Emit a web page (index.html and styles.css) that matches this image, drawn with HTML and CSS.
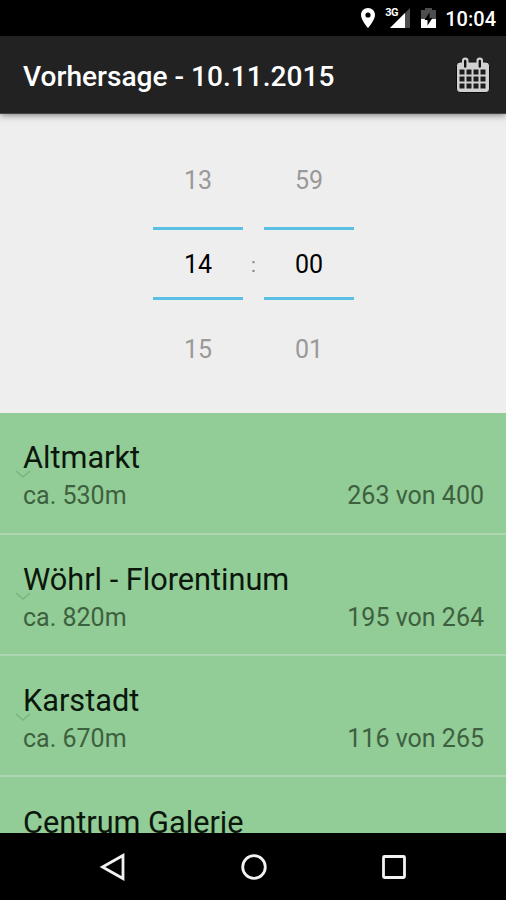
FILE: index.html
```
<!DOCTYPE html>
<html lang="de">
<head>
  <meta charset="utf-8">
  <title>Vorhersage</title>
  <link rel="stylesheet" href="styles.css">
</head>
<body>
  <div class="status">
    <svg class="pin" width="14" height="20" viewBox="0 0 14 20">
      <path fill="#fff" fill-rule="evenodd" d="M7 0C3 0 0 3 0 7c0 5 7 13 7 13s7-8 7-13c0-4-3-7-7-7zm0 4.400a2.600 2.600 0 1 1 0 5.200 2.600 2.600 0 0 1 0-5.200z"/>
    </svg>
    <div class="signal">
      <span>3G</span>
      <svg width="20" height="20" viewBox="0 0 20 20">
        <path fill="#4d4d4d" d="M20 0v20H0z"/>
        <path fill="#fff" d="M15 5v15H0z"/>
      </svg>
    </div>
    <svg class="battery" width="15" height="20" viewBox="0 0 15 20">
      <path fill="#4d4d4d" d="M4 0h7v2h4v9H0V2h4z"/>
      <path fill="#fff" d="M0 11h15v9H0z"/>
      <path fill="#000" d="M8.500 4.500v5.500h3l-5 7.500V12h-3z"/>
    </svg>
    <span class="clock">10:04</span>
  </div>

  <header>
    <h1>Vorhersage - 10.11.2015</h1>
    <svg width="34" height="36" viewBox="0 0 34 36">
      <rect x=".5" y="5" width="33" height="30.500" rx="3.500" fill="#d0d0d0" stroke="#0c0c0c"/>
      <rect x="6" y=".5" width="6.500" height="11" rx="3.200" fill="#d0d0d0"/>
      <rect x="20.500" y=".5" width="6.500" height="11" rx="3.200" fill="#d0d0d0"/>
      <path stroke="#111" stroke-width="2.400" stroke-linecap="round" d="M9.200 4v5.500M23.800 4v5.500"/>
      <path stroke="#1c1c1c" stroke-width="5" stroke-dasharray="5 2" d="M3.500 15h26M3.500 22h26M3.500 29h26"/>
    </svg>
  </header>

  <div class="picker">
    <div class="wheel">
      <span>13</span>
      <span class="selected">14</span>
      <span>15</span>
    </div>
    <span class="colon">:</span>
    <div class="wheel">
      <span>59</span>
      <span class="selected">00</span>
      <span>01</span>
    </div>
  </div>

  <ul class="list">
    <li>
      <svg class="arrow" width="16" height="8" viewBox="0 0 16 8"><path d="M1 1l7 6 7-6"/></svg>
      <h2>Altmarkt</h2>
      <p><span>ca. 530m</span><span>263 von 400</span></p>
    </li>
    <li>
      <svg class="arrow" width="16" height="8" viewBox="0 0 16 8"><path d="M1 1l7 6 7-6"/></svg>
      <h2>Wöhrl - Florentinum</h2>
      <p><span>ca. 820m</span><span>195 von 264</span></p>
    </li>
    <li>
      <svg class="arrow" width="16" height="8" viewBox="0 0 16 8"><path d="M1 1l7 6 7-6"/></svg>
      <h2>Karstadt</h2>
      <p><span>ca. 670m</span><span>116 von 265</span></p>
    </li>
    <li>
      <h2>Centrum Galerie</h2>
    </li>
  </ul>

  <nav>
    <svg width="28" height="28" viewBox="0 0 28 28"><path d="M24 2.500v23L3.500 14z"/></svg>
    <svg width="28" height="28" viewBox="0 0 28 28"><circle cx="14" cy="14" r="11.300"/></svg>
    <svg width="28" height="28" viewBox="0 0 28 28"><rect x="3.500" y="3.500" width="21" height="21" rx="1"/></svg>
  </nav>
</body>
</html>
```

FILE: styles.css
```
* {
  box-sizing: border-box;
}
body {
  margin: 0;
  height: 900px;
  display: flex;
  flex-direction: column;
  overflow: hidden;
  background: #eee;
  font-family: Roboto, sans-serif;
}
h1, h2, p, ul {
  margin: 0;
  padding: 0;
  font-weight: normal;
}
.status {
  flex: none;
  height: 36px;
  padding: 0 10px 0 0;
  display: flex;
  align-items: center;
  justify-content: flex-end;
  background: #000;
  color: #fff;
}
.signal {
  position: relative;
  display: flex;
  margin: 0 11px 0 15px;
}
.signal span {
  position: absolute;
  left: -5px;
  top: -1px;
  font-size: 11px;
  line-height: 12px;
  font-weight: bold;
  letter-spacing: -0.5px;
}
.clock {
  margin-left: 9px;
  padding-top: 2px;
  font-size: 20px;
  font-weight: 500;
}
header {
  flex: none;
  height: 78px;
  padding: 0 16px 0 23px;
  display: flex;
  align-items: center;
  justify-content: space-between;
  background: #222;
  border-bottom: 1px solid #444;
  color: #fff;
  box-shadow: 0 1px 7px rgba(0, 0, 0, 0.5);
}
header h1 {
  font-size: 28.1px;
  font-weight: 500;
  padding-top: 3px;
}
.picker {
  flex: none;
  height: 298.5px;
  padding: 25px 0 0 1px;
  display: flex;
  justify-content: center;
  font-size: 25px;
}
.wheel {
  width: 90px;
  text-align: center;
  line-height: 84px;
  color: #999;
}
.wheel span {
  display: block;
}
.wheel .selected {
  margin: 4px 0 8px;
  padding-top: 2px;
  border-top: 3px solid #5bbfe3;
  border-bottom: 3px solid #5bbfe3;
  line-height: 65px;
  color: #000;
}
.colon {
  width: 21px;
  text-align: center;
  padding-top: 114px;
  font-size: 20px;
  color: #888;
}
.list {
  flex: 1;
  min-height: 0;
  overflow: hidden;
  list-style: none;
  background: #92cc96;
}
.list li {
  position: relative;
  height: 121.4px;
  padding: 26.5px 22px 0 23px;
  border-bottom: 2px solid #afd6b2;
}
.list li:first-child {
  height: 122px;
}
.list h2 {
  font-size: 30.7px;
  line-height: 38px;
  color: #0b170c;
}
.list p {
  display: flex;
  justify-content: space-between;
  font-size: 25px;
  line-height: 37px;
  color: #3d613f;
}
.arrow {
  position: absolute;
  left: 15px;
  top: 57px;
  fill: none;
  stroke: #7cb380;
  stroke-width: 1.5;
}
nav {
  flex: none;
  height: 67px;
  padding: 0 98px 0 99px;
  display: flex;
  align-items: center;
  justify-content: space-between;
  background: #000;
}
nav svg {
  fill: none;
  stroke: #f2f2f2;
  stroke-width: 2.8;
}
```
